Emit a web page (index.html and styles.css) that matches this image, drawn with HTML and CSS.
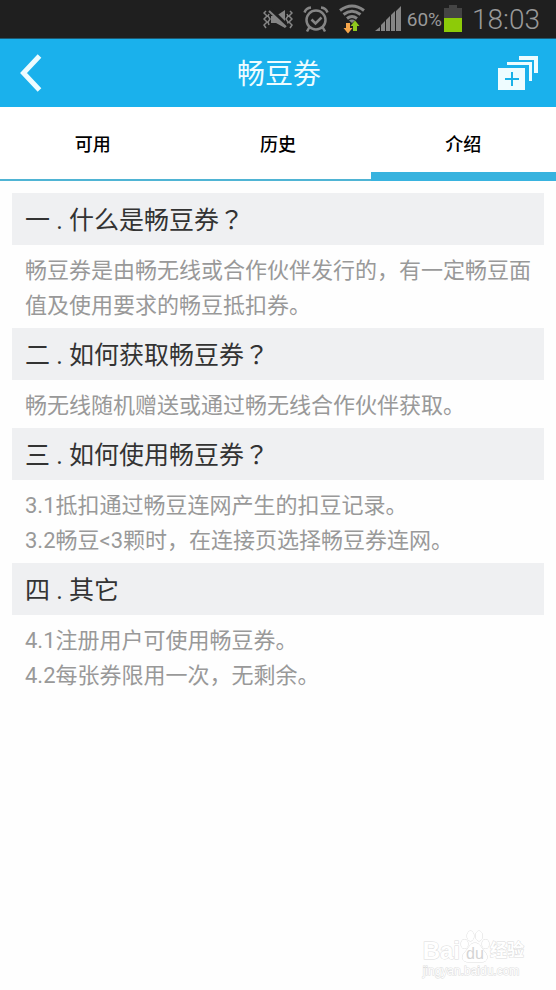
FILE: index.html
```html
<!DOCTYPE html>
<html lang="zh-CN">
<head>
<meta charset="utf-8">
<meta name="viewport" content="width=device-width, initial-scale=1">
<title>畅豆劵</title>
<link rel="stylesheet" href="styles.css">
</head>
<body>
<div class="status">
  <svg class="status-icon" width="30" height="24" viewBox="0 0 30 24" fill="none" stroke="#858585" stroke-width="2" aria-hidden="true">
    <path d="M3 4l-2 2 3 3-3 3 3 3-3 3 2 3M6 7l-1 2 2 3-2 3 1 3M27 4l2 2-3 3 3 3-3 3 3 3-2 3M24 7l1 2-2 3 2 3-1 3" stroke-width="1.5"/>
    <path d="M8 9h5l9-6v18l-9-5H8z" fill="#858585" stroke="none"/>
    <path d="M7 2l17 17" stroke="#1f1f1f" stroke-width="4"/>
    <path d="M6 4l17 16"/>
  </svg>
  <svg class="status-icon" width="26" height="28" viewBox="0 0 26 28" fill="none" stroke="#858585" stroke-width="2.5" aria-hidden="true">
    <circle cx="13" cy="15" r="9.5"/>
    <path d="M8.500 14.500l4 4 6-6M1.500 7.500Q3 3 8 2.500M24.500 7.500Q23 3 18 2.500M6.500 22L4 26.500M19.500 22l2.500 4.500"/>
  </svg>
  <svg class="status-icon wifi" width="26" height="30" viewBox="0 0 26 30" aria-hidden="true">
    <g fill="none" stroke="#858585" stroke-width="3">
      <path d="M1 6.500Q13-2.500 25 6.500M4.500 10.500Q13 4 21.500 10.500M8 14.500Q13 10.500 18 14.500"/>
    </g>
    <path d="M10 16.500Q13 14.500 16 16.500L13 19z" fill="#858585"/>
    <path d="M7 19h4v5h2.500L9 29.500 4.500 24H7z" fill="#f5a54a"/>
    <path d="M14 27h4v-5h2.500L16 16.500 11.500 22H14z" fill="#8fc81e"/>
  </svg>
  <svg class="status-icon" width="26" height="26" viewBox="0 0 26 26" fill="#858585" aria-hidden="true">
    <path d="M0 25l5-4v4zM6 25v-6l4-4v10zM11 25V14l4-4v15zM16 25V9l4-4v20zM21 25V5l5-5v25z"/>
  </svg>
  <span class="percent">60%</span>
  <svg class="status-icon" width="18" height="28" viewBox="0 0 18 28" aria-hidden="true">
    <path d="M5 0h8v3h5v11H0V3h5z" fill="#444"/>
    <path d="M0 13h18v14H0z" fill="#8dcb08"/>
  </svg>
  <time class="clock">18:03</time>
</div>
<header class="bar">
  <button class="bar-button" type="button" aria-label="返回">
    <svg width="22" height="38" viewBox="0 0 22 38" fill="none" stroke="#eefcff" stroke-width="5" aria-hidden="true"><path d="M19.500 2L3.500 19l16 17"/></svg>
  </button>
  <h1 class="title">畅豆劵</h1>
  <button class="bar-button" type="button" aria-label="添加">
    <svg width="40" height="36" viewBox="0 0 40 36" aria-hidden="true">
      <path d="M0 13h27v22H0zM9 7h25v19h-3V10H9zM21 1h19v17h-4V5H21z" fill="#eefcff"/>
      <path d="M7 24h14M14 17v14" stroke="#1ab1e8" stroke-width="2"/>
    </svg>
  </button>
</header>
<nav class="tabs">
  <a class="tab" href="#available">可用</a>
  <a class="tab" href="#history">历史</a>
  <a class="tab active" href="#intro" aria-current="page">介绍</a>
</nav>
<main class="content" id="intro">
  <section>
    <h2 class="question">一 . 什么是畅豆券<span class="mid" lang="zh-TW">？</span></h2>
    <p class="answer">畅豆券是由畅无线或合作伙伴发行的，有一定畅豆面值及使用要求的畅豆抵扣券。</p>
  </section>
  <section>
    <h2 class="question">二 . 如何获取畅豆券<span class="mid" lang="zh-TW">？</span></h2>
    <p class="answer">畅无线随机赠送或通过畅无线合作伙伴获取。</p>
  </section>
  <section>
    <h2 class="question">三 . 如何使用畅豆券<span class="mid" lang="zh-TW">？</span></h2>
    <p class="answer">3.1抵扣通过畅豆连网产生的扣豆记录。<br>3.2畅豆&lt;3颗时，在连接页选择畅豆券连网。</p>
  </section>
  <section>
    <h2 class="question">四 . 其它</h2>
    <p class="answer">4.1注册用户可使用畅豆券。<br>4.2每张券限用一次，无剩余。</p>
  </section>
</main>
<footer class="watermark">
  <div class="brand">
    <span class="brand-latin">Bai</span>
    <span class="paw">
      <svg width="30" height="34" viewBox="0 0 30 34" fill="#fff" stroke="#dcdcdc" aria-hidden="true">
        <ellipse cx="4.500" cy="14" rx="3.500" ry="4.500"/><ellipse cx="10.500" cy="6" rx="3.500" ry="5"/><ellipse cx="19" cy="6" rx="3.500" ry="5"/><ellipse cx="25.500" cy="14" rx="3.500" ry="4.500"/>
        <path d="M15 13c5 0 6 5 10 9 4 5 2 10-3 10H8c-5 0-8-5-3-10 4-4 5-9 10-9z"/>
      </svg>
      <span class="paw-text">du</span>
    </span>
    <span class="brand-cjk">经验</span>
  </div>
  <div class="site">jingyan.baidu.com</div>
</footer>
</body>
</html>
```

FILE: styles.css
```css
* {
  box-sizing: border-box;
}

body {
  margin: 0;
  min-height: 100vh;
  display: flex;
  flex-direction: column;
  background: #fefefe;
  color: #333;
  font-family: Roboto, "Noto Sans CJK SC", sans-serif;
}

h1, h2, p {
  margin: 0;
  font-weight: 400;
}

.status {
  display: flex;
  align-items: center;
  justify-content: flex-end;
  height: 39px;
  padding-right: 16px;
  background: #1f1f1f;
  border-bottom: 1px solid #1c5a74;
  color: #999;
}

.status-icon {
  flex: none;
  margin-right: 10px;
}

.percent {
  margin-left: -4px;
  margin-right: 2px;
  font-size: 19px;
}

.clock {
  font-size: 28px;
  font-weight: 300;
}

.bar {
  display: flex;
  align-items: center;
  justify-content: space-between;
  height: 68px;
  padding: 0 18px 0 20px;
  background: #1ab1ec;
}

.bar-button {
  display: flex;
  width: 40px;
  padding: 0;
  border: 0;
  background: none;
}

.title {
  padding-top: 4px;
  color: #eefcff;
  font-size: 28px;
  line-height: 40px;
}

.tabs {
  display: grid;
  grid-template-columns: repeat(3, 1fr);
  height: 74px;
  background: #fff;
}

.tab {
  display: flex;
  align-items: center;
  justify-content: center;
  border-bottom: 2px solid #4fb4d4;
  color: #000;
  font-size: 18px;
  font-weight: 500;
  text-decoration: none;
}

.tab.active {
  padding-top: 7px;
  border-bottom: 9px solid #38b3df;
}

.content {
  flex: 1;
  padding: 12px;
}

.question {
  padding: 10px 13px 6px;
  background: #eff0f2;
  font-size: 25px;
  line-height: 36px;
}

.answer {
  padding: 8px 0 5px 13px;
  color: #999;
  font-size: 22px;
  line-height: 35px;
}

.mid {
  font-family: "Noto Sans CJK TC", sans-serif;
  line-height: 1;
}

.watermark {
  align-self: flex-end;
  padding: 0 32px 12px 0;
  color: #fff;
  font-family: "Liberation Sans", "Noto Sans CJK SC", sans-serif;
  -webkit-text-stroke: 1px #dcdcdc;
  paint-order: stroke fill;
}

.brand {
  display: flex;
  align-items: flex-end;
  height: 34px;
}

.brand-latin {
  font-size: 24px;
  font-weight: 700;
  line-height: 26px;
}

.paw {
  display: grid;
}

.paw > * {
  grid-area: 1 / 1;
}

.paw-text {
  place-self: end center;
  z-index: 1;
  color: #d4d4d4;
  font-size: 16px;
  line-height: 20px;
  -webkit-text-stroke: 0;
}

.brand-cjk {
  font-size: 17px;
  font-weight: 700;
  line-height: 26px;
}

.site {
  font-size: 12px;
  line-height: 14px;
}
```
